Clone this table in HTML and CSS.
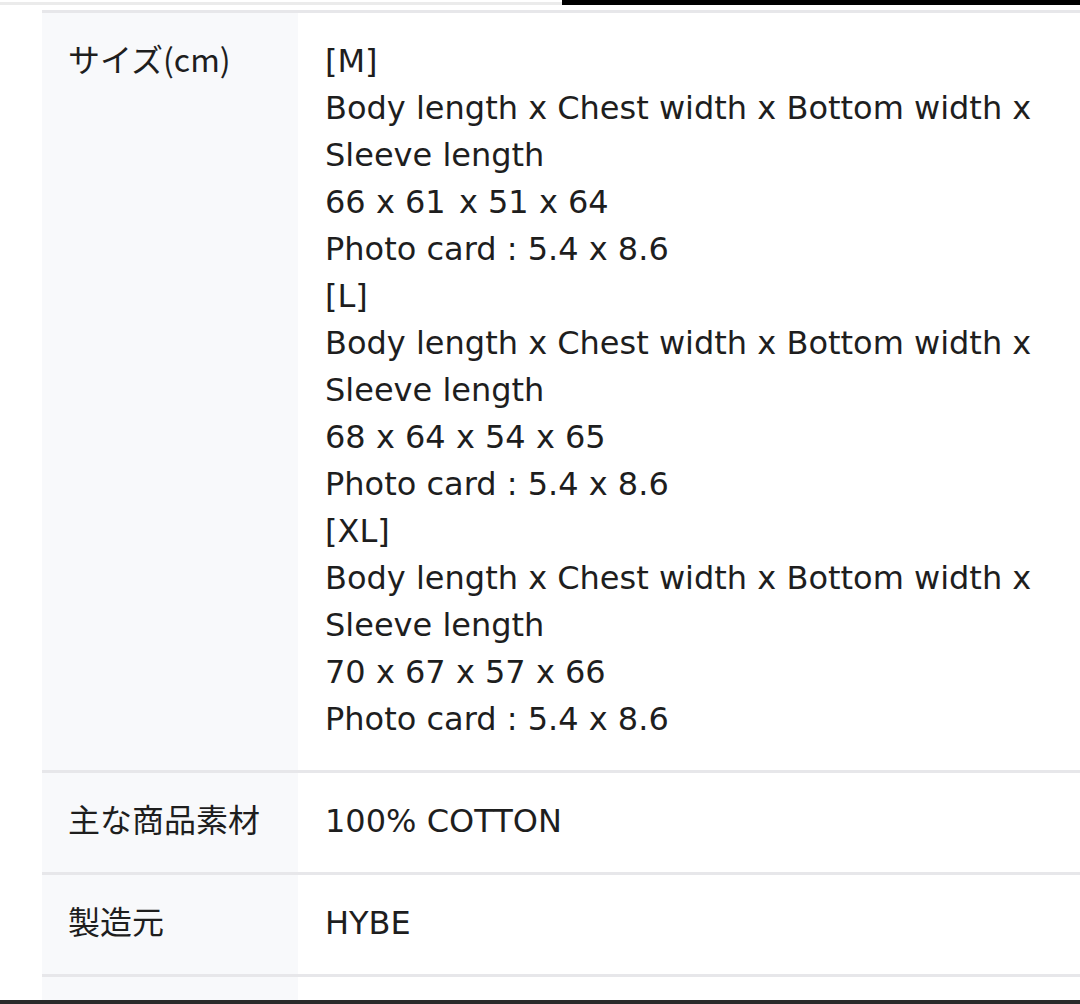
FILE: index.html
```html
<!DOCTYPE html>
<html lang="ja">
<head>
<meta charset="utf-8">
<title>商品詳細</title>
<link rel="stylesheet" href="styles.css">
</head>
<body>
<div class="topbar">
  <div class="topbar-line"></div>
  <div class="topbar-black"></div>
</div>
<div class="spec">
  <div class="row">
    <div class="label">サイズ(cm)</div>
    <div class="value">
      <div>[M]</div>
      <div>Body length x Chest width x Bottom width x Sleeve length</div>
      <div>66 x 61 <span class="gap"></span>x 51 x 64</div>
      <div>Photo card : 5.4 x 8.6</div>
      <div>[L]</div>
      <div>Body length x Chest width x Bottom width x Sleeve length</div>
      <div>68 x 64 x 54 x 65</div>
      <div>Photo card : 5.4 x 8.6</div>
      <div>[XL]</div>
      <div>Body length x Chest width x Bottom width x Sleeve length</div>
      <div>70 x 67 x 57 x 66</div>
      <div>Photo card : 5.4 x 8.6</div>
    </div>
  </div>
  <div class="row">
    <div class="label">主な商品素材</div>
    <div class="value">100% COTTON</div>
  </div>
  <div class="row">
    <div class="label">製造元</div>
    <div class="value">HYBE</div>
  </div>
  <div class="row row-filler">
    <div class="label"></div>
    <div class="value"></div>
  </div>
</div>
<div class="bottombar"></div>
</body>
</html>
```
FILE: styles.css
```css
html, body {
  margin: 0;
  padding: 0;
  background: #ffffff;
}
body {
  width: 1080px;
  height: 1004px;
  overflow: hidden;
  font-family: "DejaVu Sans", "Noto Sans CJK JP", sans-serif;
  color: #1e1e1e;
}
.topbar {
  display: flex;
  height: 10px;
}
.topbar-line {
  flex: 0 0 562px;
  height: 3px;
  margin-top: 2px;
  background: #ebebeb;
}
.topbar-black {
  flex: 1;
  height: 5px;
  background: #000000;
}
.spec {
  margin-left: 42px;
  border-top: 3px solid #e7e7ea;
}
.row {
  display: grid;
  grid-template-columns: 256px 1fr;
  border-bottom: 3px solid #e7e7ea;
}
.label {
  background: #f8f9fb;
  padding: 22px 0 30px 26px;
  font-family: "Noto Sans CJK JP", sans-serif;
  font-size: 32px;
  line-height: 47px;
  color: #1e1e1e;
}
.value {
  padding: 25px 20px 27px 27px;
  font-size: 32px;
  line-height: 47px;
  color: #1e1e1e;
}
.gap {
  display: inline-block;
  width: 3px;
}
.row-filler {
  border-bottom: none;
  height: 23px;
}
.row-filler .label,
.row-filler .value {
  padding: 0;
}
.bottombar {
  height: 4px;
  background: #2a2a2a;
}
```
